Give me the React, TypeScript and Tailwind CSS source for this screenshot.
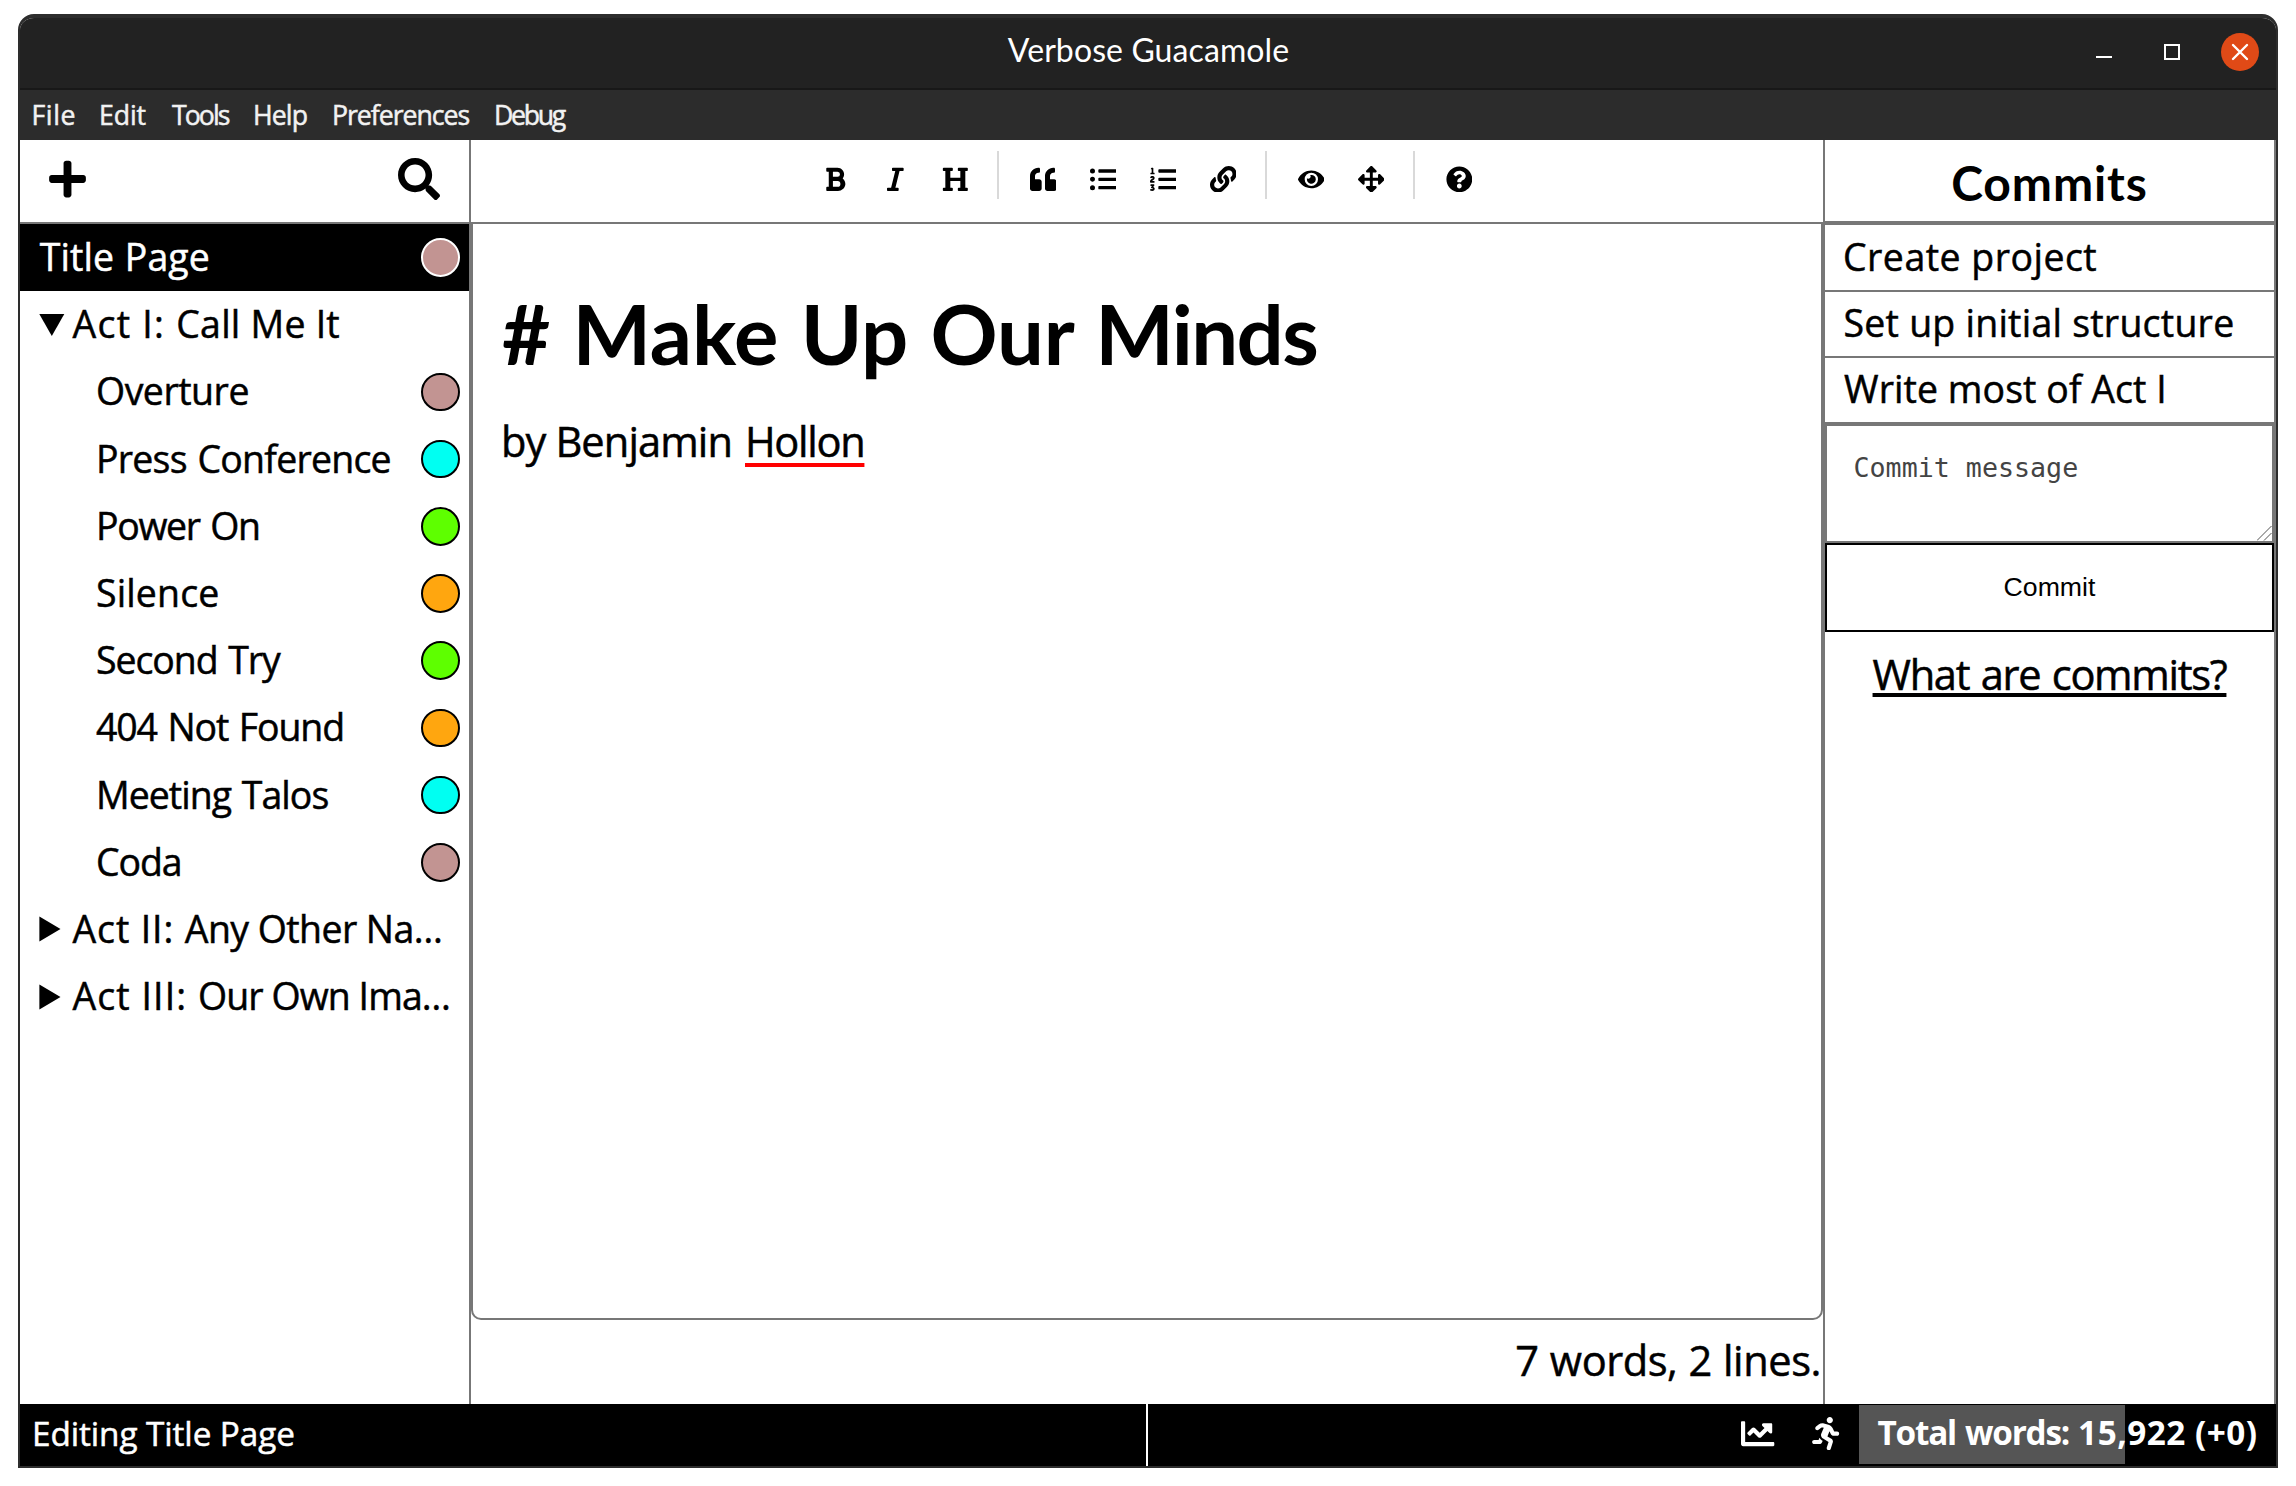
import React from "react";
import {
  FaArrowsAlt,
  FaBold,
  FaChartLine,
  FaEye,
  FaHeading,
  FaItalic,
  FaLink,
  FaListOl,
  FaListUl,
  FaPlus,
  FaQuestionCircle,
  FaQuoteLeft,
  FaRunning,
  FaSearch,
} from "react-icons/fa";

const menus = [
  { label: "File", cls: "w-[67.5px] tracking-[0.6px]" },
  { label: "Edit", cls: "w-[73px] tracking-[-0.08px]" },
  { label: "Tools", cls: "w-[81px] tracking-[-1.95px]" },
  { label: "Help", cls: "w-[79px] tracking-[-0.88px]" },
  { label: "Preferences", cls: "w-[162px] tracking-[-1.03px]" },
  { label: "Debug", cls: "w-[90px] tracking-[-2.3px]" },
];

const chapters = [
  { name: "Overture", dot: "bg-[#c29492]", cls: "tracking-[-0.47px]" },
  { name: "Press Conference", dot: "bg-[#00fff2]", cls: "tracking-[-0.75px] [word-spacing:1.8px]" },
  { name: "Power On", dot: "bg-[#5eff00]", cls: "tracking-[-1.3px] [word-spacing:2px]" },
  { name: "Silence", dot: "bg-[#ffa60f]", cls: "tracking-[0.15px]" },
  { name: "Second Try", dot: "bg-[#5eff00]", cls: "tracking-[-1.05px] [word-spacing:2px]" },
  { name: "404 Not Found", dot: "bg-[#ffa60f]", cls: "tracking-[-1.1px] [word-spacing:2px]" },
  { name: "Meeting Talos", dot: "bg-[#00fff2]", cls: "tracking-[-0.95px] [word-spacing:2px]" },
  { name: "Coda", dot: "bg-[#c29492]", cls: "tracking-[-1.09px]" },
];

const tools: (React.ComponentType | null)[] = [
  FaBold,
  FaItalic,
  FaHeading,
  null,
  FaQuoteLeft,
  FaListUl,
  FaListOl,
  FaLink,
  null,
  FaEye,
  FaArrowsAlt,
  null,
  FaQuestionCircle,
];

function TitleBar() {
  return (
    <div className="grid h-[72px] shrink-0 grid-cols-[1fr_auto_1fr] border-b-2 border-[#181818] bg-[#222222]">
      <div />
      <div className="flex items-center pb-[7px] pl-px font-['Lato',sans-serif] text-[32px] tracking-[0.1px] text-white [-webkit-text-stroke:0]">
        Verbose Guacamole
      </div>
      <div className="flex justify-end gap-[30px] pt-[15px] pr-[17px]">
        <div className="flex size-[38px] items-center justify-center pt-[10px]">
          <div className="h-[2px] w-4 bg-white" />
        </div>
        <div className="flex size-[38px] items-center justify-center">
          <div className="size-4 border-2 border-white" />
        </div>
        <div className="flex size-[38px] items-center justify-center rounded-full bg-[#e04a17]">
          <svg viewBox="0 0 18 18" className="size-[18px]" stroke="white" strokeWidth="2.4" strokeLinecap="round">
            <path d="M2 2 16 16M16 2 2 16" />
          </svg>
        </div>
      </div>
    </div>
  );
}

function MenuBar() {
  return (
    <div className="flex h-[50px] shrink-0 items-center bg-[#2c2c2c] pb-[1px] pl-[11.5px] text-[26.67px] text-[#f2f2f2]">
      {menus.map((m) => (
        <div key={m.label} className={m.cls}>
          {m.label}
        </div>
      ))}
    </div>
  );
}

type ActProps = { label: string; title: string; open?: boolean; labelCls: string; titleCls: string };

function Act({ label, title, open, labelCls, titleCls }: ActProps) {
  return (
    <div className="flex h-[67.2px] items-center pl-[19px]">
      <svg viewBox="0 0 26 26" className="mr-[7.5px] size-[26px] shrink-0">
        <path d={open ? "M.3 2h25L12.8 24z" : "M.4.5v25L21.5 13z"} />
      </svg>
      <div className="pb-[1px] whitespace-pre">
        <span className={labelCls}>{label} </span>
        <span className={titleCls}>{title}</span>
      </div>
    </div>
  );
}

function Sidebar() {
  return (
    <aside className="flex w-[451px] shrink-0 flex-col border-r-2 border-[#777777]">
      <div className="flex h-[84px] shrink-0 items-center justify-between border-b-2 border-[#777777] pr-[29px] pb-[5px] pl-[29px] text-[42px] [&_svg]:shrink-0">
        <FaPlus className="w-[37px]" />
        <FaSearch />
      </div>
      <div className="text-[37.44px]">
        <div className="flex h-[67.2px] items-center justify-between bg-black pr-[9.5px] pl-[19.7px] text-white">
          <div className="pb-[1px] tracking-[0.1px] [word-spacing:1px]">Title Page</div>
          <div className="size-[38.5px] rounded-full border-2 border-white bg-[#c29492]" />
        </div>
        <Act label="Act I:" title="Call Me It" open labelCls="tracking-[1.3px]" titleCls="tracking-[0.25px]" />
        {chapters.map((c) => (
          <div key={c.name} className="flex h-[67.2px] items-center justify-between pr-[9.5px] pl-[76px]">
            <div className={`pb-[1px] whitespace-nowrap ${c.cls}`}>{c.name}</div>
            <div className={`size-[38.5px] rounded-full border-2 border-black ${c.dot}`} />
          </div>
        ))}
        <Act label="Act II:" title="Any Other Na…" labelCls="tracking-[0.9px]" titleCls="tracking-[-0.55px]" />
        <Act label="Act III:" title="Our Own Ima…" labelCls="tracking-[1.1px]" titleCls="tracking-[-0.9px]" />
      </div>
    </aside>
  );
}

function Editor() {
  return (
    <main className="flex min-w-0 flex-1 flex-col">
      <div className="flex h-[82px] shrink-0 items-center justify-center pb-3 text-[26.67px]">
        {tools.map((Tool, i) =>
          Tool ? (
            <div key={i} className="flex h-[60px] w-[60px] items-center justify-center pt-2">
              <Tool />
            </div>
          ) : (
            <div key={i} className="mr-[14px] ml-[12px] h-12 w-[2px] bg-[#d9d9d9]" />
          ),
        )}
      </div>
      <div className="h-[1098px] shrink-0 rounded-b-[10px] border-2 border-[#777777] pt-[58px] pl-[28px]">
        <div className="h-[100px] pt-px pl-[1px] font-['Lato',sans-serif] text-[83.2px] leading-[100px] font-bold tracking-[-0.14px] whitespace-pre [word-spacing:2.3px] [-webkit-text-stroke:0]">
          # Make Up Our <span className="tracking-[-1.6px]">Minds</span>
        </div>
        <div className="mt-[29px] h-[60px] text-[41.6px] leading-[60px] whitespace-pre">
          <span className="inline-block w-[244px] tracking-[-0.9px]">by Benjamin </span>
          <span className="tracking-[-1.3px] underline decoration-[#ff0000] decoration-[4px] underline-offset-[6px]">
            Hollon
          </span>
        </div>
      </div>
      <div className="flex flex-1 items-center justify-end pr-[2px] pb-[4px] text-[41.6px] tracking-[-0.45px] [word-spacing:0.8px]">
        7 words, 2 lines.
      </div>
    </main>
  );
}

function Commits() {
  return (
    <aside className="flex w-[453px] shrink-0 flex-col border-x-2 border-[#777777]">
      <h2 className="flex h-[83px] shrink-0 items-center justify-center border-b-2 border-[#777777] pt-[4px] font-['Lato',sans-serif] text-[48px] font-bold tracking-[0.9px] [-webkit-text-stroke:0]">
        Commits
      </h2>
      <div className="border-t-2 border-[#777777] text-[37.44px] whitespace-nowrap">
        <div className="flex h-[67px] items-center border-b-2 border-[#777777] pl-[18px] tracking-[0.5px]">
          Create project
        </div>
        <div className="flex h-[66px] items-center border-b-2 border-[#777777] pb-[1px] pl-[18.5px] tracking-[0.26px]">
          Set up initial structure
        </div>
        <div className="flex h-[66px] items-center border-b-2 border-[#777777] pb-[1px] pl-[19px] tracking-[0.08px]">
          Write most of Act I
        </div>
      </div>
      <div className="relative h-[119px] border-2 border-[#777777]">
        <textarea
          placeholder="Commit message"
          className="block h-full w-full resize-none pt-[26px] pl-[26.5px] font-['DejaVu_Sans_Mono',monospace] text-[26.67px] leading-[31px] placeholder:text-[#444444] [-webkit-text-stroke:0]"
        />
        <svg viewBox="0 0 15 15" className="absolute right-0 bottom-0 size-[15px]" stroke="#555555" fill="none">
          <path d="M0 14.5 14.5 0M7 14.5 14.5 7" />
        </svg>
      </div>
      <button className="h-[89px] border-2 border-black pb-[1px] font-['Liberation_Sans',sans-serif] text-[26.67px] [-webkit-text-stroke:0]">
        Commit
      </button>
      <div className="flex h-[84px] items-center justify-center pt-[1px] text-[41.6px]">
        <span className="tracking-[-1.3px] underline decoration-[4px] underline-offset-[3px] [word-spacing:2px]">
          What are commits?
        </span>
      </div>
    </aside>
  );
}

function StatusBar() {
  return (
    <footer className="flex h-[62px] shrink-0 bg-black text-[33.3px] text-white">
      <div className="flex w-[1128px] items-center border-r-2 border-white pb-[2px] pl-[12px] tracking-[-0.09px]">
        Editing Title Page
      </div>
      <div className="flex flex-1 items-center justify-end gap-[34px] pr-[17px] pb-[3px]">
        <FaChartLine />
        <FaRunning />
      </div>
      <div className="relative my-[1px] flex w-[417px] items-center justify-center pb-[4px] font-bold [-webkit-text-stroke:0]">
        <div className="absolute top-0 left-0 h-[59px] w-[266px] bg-[#555555]" />
        <div className="relative whitespace-pre">
          <span className="tracking-[-1.2px] [word-spacing:1.5px]">Total words: </span>
          <span className="tracking-[0.5px]">15,922 (+0)</span>
        </div>
      </div>
    </footer>
  );
}

export default function App() {
  return (
    <div className="h-[1486px] w-[2296px] bg-white pt-[14px] pl-[18px] font-['Open_Sans',sans-serif] text-black [-webkit-text-stroke:0.5px]">
      <div className="flex h-[1454px] w-[2260px] flex-col overflow-hidden rounded-t-[16px] border-x-2 border-t-4 border-b-2 border-[#2d2d2d] bg-white">
        <TitleBar />
        <MenuBar />
        <div className="flex min-h-0 flex-1">
          <Sidebar />
          <Editor />
          <Commits />
        </div>
        <StatusBar />
      </div>
    </div>
  );
}
